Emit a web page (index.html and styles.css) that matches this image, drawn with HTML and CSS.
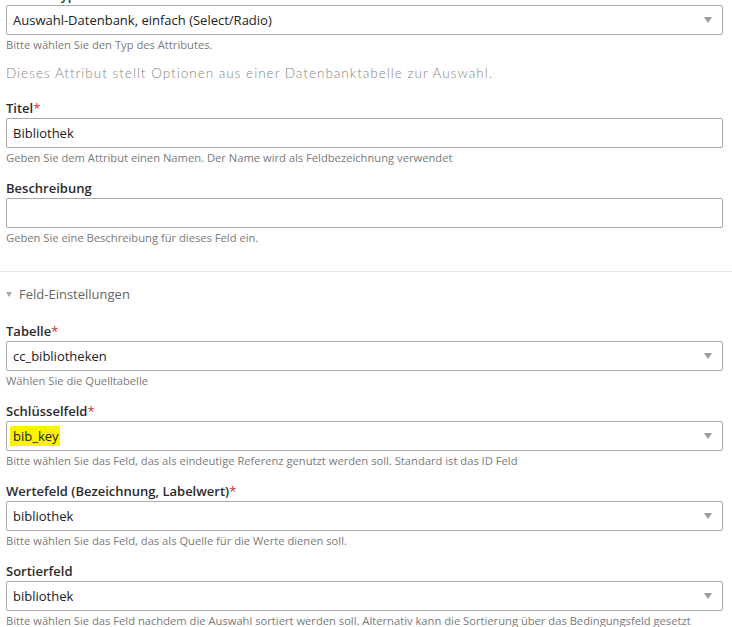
FILE: index.html
```html
<!DOCTYPE html>
<html lang="de">
<head>
<meta charset="utf-8">
<title>Attribut</title>
<link rel="stylesheet" href="styles.css">
</head>
<body>
<div class="form">
  <div class="field">
    <div class="label">Attributtyp</div>
    <div class="box select"><span class="value">Auswahl-Datenbank, einfach (Select/Radio)</span><span class="caret"></span></div>
    <div class="help">Bitte wählen Sie den Typ des Attributes.</div>
  </div>
  <div class="note">Dieses Attribut stellt Optionen aus einer Datenbanktabelle zur Auswahl.</div>
  <div class="field">
    <div class="label">Titel<span class="req">*</span></div>
    <div class="box"><span class="value">Bibliothek</span></div>
    <div class="help">Geben Sie dem Attribut einen Namen. Der Name wird als Feldbezeichnung verwendet</div>
  </div>
  <div class="field">
    <div class="label">Beschreibung</div>
    <div class="box"><span class="value"></span></div>
    <div class="help">Geben Sie eine Beschreibung für dieses Feld ein.</div>
  </div>
  <hr class="sep">
  <div class="section"><span class="sec-caret"></span>Feld-Einstellungen</div>
  <div class="field">
    <div class="label">Tabelle<span class="req">*</span></div>
    <div class="box select"><span class="value">cc_bibliotheken</span><span class="caret"></span></div>
    <div class="help">Wählen Sie die Quelltabelle</div>
  </div>
  <div class="field">
    <div class="label">Schlüsselfeld<span class="req">*</span></div>
    <div class="box select"><span class="value"><mark class="hl">bib_key</mark></span><span class="caret"></span></div>
    <div class="help">Bitte wählen Sie das Feld, das als eindeutige Referenz genutzt werden soll. Standard ist das ID Feld</div>
  </div>
  <div class="field">
    <div class="label">Wertefeld (Bezeichnung, Labelwert)<span class="req">*</span></div>
    <div class="box select"><span class="value">bibliothek</span><span class="caret"></span></div>
    <div class="help">Bitte wählen Sie das Feld, das als Quelle für die Werte dienen soll.</div>
  </div>
  <div class="field">
    <div class="label">Sortierfeld</div>
    <div class="box select"><span class="value">bibliothek</span><span class="caret"></span></div>
    <div class="help wrap">Bitte wählen Sie das Feld nachdem die Auswahl sortiert werden soll. Alternativ kann die Sortierung über das Bedingungsfeld gesetzt werden.</div>
  </div>
</div>
</body>
</html>
```
FILE: styles.css
```css
html, body {
  margin: 0;
  padding: 0;
  background: #ffffff;
  overflow: hidden;
}
body {
  font-family: "Open Sans", "Noto Sans", "Liberation Sans", sans-serif;
  color: #333333;
}
.form {
  padding: 0 9px 0 6px;
  margin-top: -15px;
}
.field {
  margin-bottom: 10px;
}
.label {
  font-size: 13px;
  font-weight: 600;
  line-height: 20px;
  height: 20px;
  color: #2b2b2b;
  white-space: nowrap;
}
.req {
  color: #c9302c;
  font-weight: 400;
}
.box {
  box-sizing: border-box;
  height: 30px;
  border: 1px solid #a9a9a9;
  border-radius: 2px;
  display: flex;
  align-items: center;
  padding: 0 10px 0 6px;
  font-size: 13px;
  color: #222222;
}
.value {
  flex: 1;
  white-space: nowrap;
}
.hl {
  background: #fbf200;
  color: #222222;
  padding: 1px 1px 1px 3px;
  margin-left: -3px;
}
.caret {
  width: 0;
  height: 0;
  border-left: 4px solid transparent;
  border-right: 4px solid transparent;
  border-top: 6px solid #9a9a9a;
}
.help {
  font-size: 11.2px;
  line-height: 20px;
  height: 20px;
  color: #7a7a7a;
  white-space: nowrap;
}
.help.wrap {
  white-space: normal;
  height: auto;
}
.note {
  font-family: "Lato", "DejaVu Sans", sans-serif;
  font-weight: 300;
  font-size: 13.5px;
  letter-spacing: 1px;
  line-height: 20px;
  color: #858585;
  margin: -2px 0 15px;
}
.sep {
  border: 0;
  border-top: 1px solid #e6e6e6;
  margin: 23px -9px 0 -6px;
  height: 0;
}
.section {
  display: flex;
  align-items: center;
  font-size: 13px;
  line-height: 20px;
  color: #666666;
  margin: 12px 0 17px;
}
.sec-caret {
  width: 0;
  height: 0;
  border-left: 3px solid transparent;
  border-right: 3px solid transparent;
  border-top: 5px solid #a8a8a8;
  margin: 0 7px 0 0;
}
```
